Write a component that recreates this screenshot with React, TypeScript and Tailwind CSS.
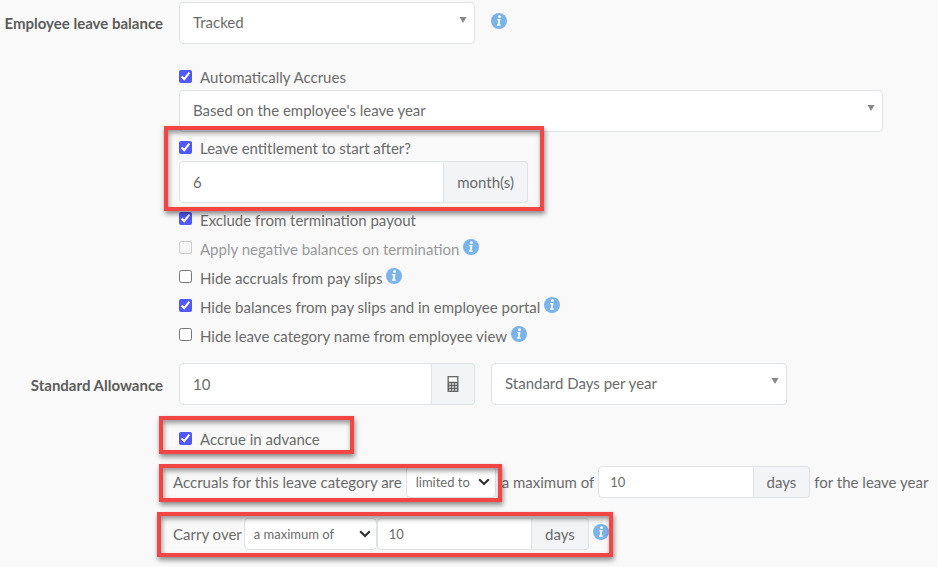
import type { ReactNode } from 'react';
import clsx from 'clsx';

const FIELD = 'border border-[#dee3e6] bg-white text-[#6b6b6b] outline-none';

function InfoIcon() {
  return (
    <button type="button" aria-label="More information" className="mb-1 size-4 shrink-0">
      <svg viewBox="0 0 16 16" className="size-4">
        <circle cx="8" cy="8" r="8" fill="#7ab3ea" />
        <circle cx="8.5" cy="3.7" r="1.4" fill="#fff" />
        <path d="M6 6h3.5L8.6 11.4h1.3L9.7 12.7H5.8l.2-1.3h.7l.7-4.1H5.8z" fill="#fff" />
      </svg>
    </button>
  );
}

function CalculatorIcon() {
  return (
    <svg viewBox="0 0 12 16" className="h-4 w-3">
      <rect x="0.5" y="0" width="11" height="16" rx="0.6" fill="#666" />
      <rect x="1.8" y="1.3" width="8.4" height="4.4" fill="#fff" />
      <path
        d="M2 7h2v2H2zM5 7h2v2H5zM8 7h2v2H8zM2 10h2v2H2zM5 10h2v2H5zM8 10h2v2H8zM2 13h2v2H2zM5 13h2v2H5zM8 13h2v2H8z"
        fill="#bdbdbd"
      />
    </svg>
  );
}

// Red frame laid over the settings being pointed out
function Highlight({ className }: { className: string }) {
  return (
    <div
      className={clsx(
        'pointer-events-none absolute z-10 border-4 border-[#f44545] shadow-[1px_3px_5px_rgba(0,0,0,0.45),inset_1px_3px_5px_rgba(0,0,0,0.4)]',
        className,
      )}
    />
  );
}

interface CheckProps {
  id: string;
  label: string;
  checked?: boolean;
  disabled?: boolean;
  info?: boolean;
  className?: string;
}

function Check({ id, label, checked, disabled, info, className = 'h-[29px]' }: CheckProps) {
  return (
    <div className={clsx('flex items-center', className)}>
      <input
        id={id}
        type="checkbox"
        defaultChecked={checked}
        disabled={disabled}
        className="mb-0.5 size-[13px] shrink-0 accent-[#5158fb]"
      />
      <label htmlFor={id} className={clsx('mr-1 pl-2', disabled && 'text-[#999]')}>
        {label}
      </label>
      {info && <InfoIcon />}
    </div>
  );
}

function Dropdown({ label, value, className }: { label: string; value: string; className: string }) {
  return (
    <div className={clsx('relative', className)}>
      <select aria-label={label} className={clsx(FIELD, 'h-[42px] w-full appearance-none rounded px-[13px] pb-0.5')}>
        <option>{value}</option>
      </select>
      <svg viewBox="0 0 8 6" className="pointer-events-none absolute top-[15px] right-2 h-1.5 w-2">
        <path d="M0.5 0h7L4 6z" fill="#888" />
      </svg>
    </div>
  );
}

function SmallDropdown({ label, value, className }: { label: string; value: string; className: string }) {
  return (
    <div className={clsx('relative shrink-0', className)}>
      <select aria-label={label} className={clsx(FIELD, 'h-8 w-full appearance-none rounded-sm px-[9px] text-[13px]')}>
        <option>{value}</option>
      </select>
      <svg viewBox="0 0 12 8" className="pointer-events-none absolute top-3 right-1.5 h-2 w-3">
        <path d="M1.2 1.2L6 6l4.8-4.8" fill="none" stroke="#333" strokeWidth="2.2" />
      </svg>
    </div>
  );
}

interface GroupProps {
  label: string;
  value: string;
  addon: ReactNode;
  small?: boolean;
  className: string;
}

function InputGroup({ label, value, addon, small, className }: GroupProps) {
  return (
    <div className={clsx('flex shrink-0', small ? 'h-8' : 'h-[42px]', className)}>
      <input
        aria-label={label}
        defaultValue={value}
        className={clsx(FIELD, 'min-w-0 flex-1 rounded-l', small ? 'px-[11px] text-[13px]' : 'px-[13px]')}
      />
      <span className="flex min-w-[43px] items-center justify-center rounded-r border border-l-0 border-[#dee3e6] bg-[#f3f4f6] px-[13px]">
        {addon}
      </span>
    </div>
  );
}

export default function App() {
  return (
    <main className="min-h-screen bg-[#f9f9f9] pt-0.5 pb-2 font-['Lato','Liberation_Sans',sans-serif] text-[15px] leading-[22px] text-[#6b6b6b]">
      <section className="grid grid-cols-[163px_1fr] gap-x-4">
        <h2 className="pt-2.5 text-right font-bold whitespace-nowrap text-[#5c5c5c]">Employee leave balance</h2>
        <div>
          <div className="flex items-center gap-4">
            <Dropdown label="Employee leave balance" value="Tracked" className="w-[296px]" />
            <InfoIcon />
          </div>

          <Check id="auto-accrues" label="Automatically Accrues" checked className="mt-[23px] mb-[3px] h-5" />
          <Dropdown label="Accrual basis" value="Based on the employee's leave year" className="w-full max-w-[704px]" />

          <div className="relative mt-1.5 w-[349px]">
            <Check id="start-after" label="Leave entitlement to start after?" checked className="mb-[3px] h-5" />
            <InputGroup label="Start after" value="6" addon="month(s)" className="w-full" />
            <Highlight className="-top-3 -right-4 -bottom-2 -left-[15px]" />
          </div>

          <div className="mt-0.5">
            <Check id="exclude-payout" label="Exclude from termination payout" checked />
            <Check id="negative-balances" label="Apply negative balances on termination" disabled info />
            <Check id="hide-accruals" label="Hide accruals from pay slips" info />
            <Check id="hide-balances" label="Hide balances from pay slips and in employee portal" checked info />
            <Check id="hide-category" label="Hide leave category name from employee view" info />
          </div>
        </div>
      </section>

      <section className="mt-[13px] grid grid-cols-[163px_1fr] gap-x-4">
        <h2 className="pt-[11px] text-right font-bold whitespace-nowrap text-[#5c5c5c]">Standard Allowance</h2>
        <div>
          <div className="flex gap-4">
            <InputGroup label="Standard allowance" value="10" addon={<CalculatorIcon />} className="w-[296px]" />
            <Dropdown label="Allowance unit" value="Standard Days per year" className="w-[296px]" />
          </div>

          <div className="relative mt-[23px] w-fit">
            <Check id="accrue-advance" label="Accrue in advance" checked className="h-[22px]" />
            <Highlight className="-top-3 -right-[30px] -bottom-1 -left-5" />
          </div>

          <div className="mt-4 -ml-1.5 flex items-center gap-1 whitespace-nowrap">
            <div className="relative flex items-center gap-1">
              <span>Accruals for this leave category are</span>
              <SmallDropdown label="Accrual limit" value="limited to" className="w-[90px]" />
              <Highlight className="-top-0.5 -right-1.5 -bottom-1 -left-3.5" />
            </div>
            <span className="pl-0.5">a maximum of</span>
            <InputGroup label="Maximum accrual" value="10" addon="days" small className="w-[212px]" />
            <span>for the leave year</span>
          </div>

          <div className="relative mt-5 -ml-1.5 flex w-fit items-center whitespace-nowrap">
            <span className="pr-0.5">Carry over</span>
            <SmallDropdown label="Carry over rule" value="a maximum of" className="w-[133px]" />
            <InputGroup label="Maximum carry over" value="10" addon="days" small className="mr-1 w-[212px]" />
            <InfoIcon />
            <Highlight className="-top-1.5 -right-1 -bottom-[7px] -left-4" />
          </div>
        </div>
      </section>
    </main>
  );
}
